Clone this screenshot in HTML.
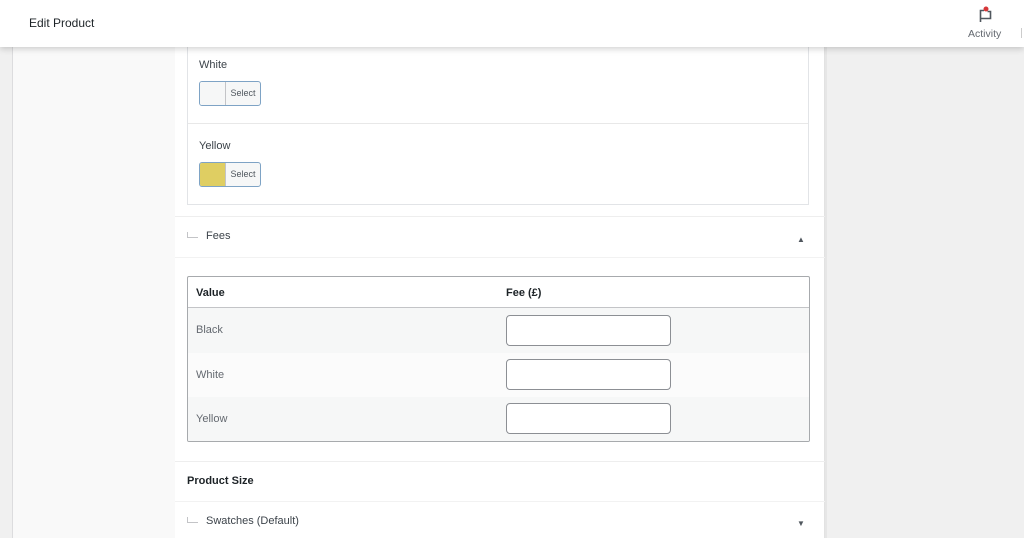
<!DOCTYPE html>
<html><head><style>
*{box-sizing:border-box;margin:0;padding:0}
body{width:1024px;height:538px;overflow:hidden;background:#f0f0f0;font-family:"Liberation Sans",sans-serif;font-size:11px;color:#3c434a;position:relative}
.a{position:absolute}
.hdr{left:0;top:0;width:1024px;height:47px;background:#fff;box-shadow:0 2px 6px rgba(0,0,0,.18);z-index:5}
.btn{position:absolute;width:62px;height:25px;border:1px solid #7ea3c5;border-radius:3px;background:#f6f7f7;display:flex;overflow:hidden}
.btn .sw{width:26px;border-right:1px solid #c3c4c7}
.btn span{flex:1;font-size:9px;line-height:23px;text-align:center;color:#50575e}
.tree{position:absolute;width:11px;height:6px;border-left:1px solid #c3c4c7;border-bottom:1px solid #c3c4c7}
.inp{position:absolute;left:318px;width:165px;height:31px;background:#fff;border:1px solid #8c8f94;border-radius:4px}
.row{position:absolute;left:0;width:621px;height:45px}
.row b{position:absolute;left:8px;top:16px;font-weight:normal;font-size:11px;color:#646970}
</style></head><body>
<div class="a" style="left:12px;top:0;width:163px;height:538px;background:#f9f9f9;border-left:1px solid #dcdcde"></div>
<div class="a" style="left:175px;top:0;width:650px;height:538px;background:#fff;border-right:1px solid #e2e2e2"></div>
<div class="a" style="left:825px;top:0;width:2px;height:538px;background:#e6e6e6"></div>
<div class="a" style="left:187px;top:40px;width:622px;height:165px;border:1px solid #e2e4e7;border-top:none"></div>
<div class="a" style="left:188px;top:123px;width:620px;height:1px;background:#e8e8e8"></div>
<div class="a" style="left:199px;top:59px;font-size:11px;color:#3c434a">White</div>
<div class="btn" style="left:199px;top:81px"><div class="sw" style="background:#f6f7f7"></div><span>Select</span></div>
<div class="a" style="left:199px;top:140px;font-size:11px;color:#3c434a">Yellow</div>
<div class="btn" style="left:199px;top:162px"><div class="sw" style="background:#dfce62"></div><span>Select</span></div>
<div class="a" style="left:175px;top:216px;width:650px;height:1px;background:#eee"></div>
<div class="a" style="left:175px;top:257px;width:650px;height:1px;background:#f2f2f2"></div>
<div class="tree" style="left:187px;top:232px"></div>
<div class="a" style="left:206px;top:230px;color:#3c434a">Fees</div>
<div class="a" style="left:797px;top:235px;font-size:8px;color:#50575e">▲</div>
<div class="a" style="left:187px;top:276px;width:623px;height:166px;border:1px solid #a7aaad;border-radius:2px;overflow:hidden;background:#fff">
 <div class="a" style="left:8px;top:10px;font-weight:bold;color:#1d2327">Value</div>
 <div class="a" style="left:318px;top:10px;font-weight:bold;color:#1d2327">Fee (£)</div>
 <div class="a" style="left:0;top:30px;width:621px;height:1px;background:#c3c4c7"></div>
 <div class="row" style="top:31px;background:#f6f7f7"><b>Black</b><div class="inp" style="top:7px"></div></div>
 <div class="row" style="top:76px;background:#fbfbfb"><b>White</b><div class="inp" style="top:6px"></div></div>
 <div class="row" style="top:120px;background:#f6f7f7"><b>Yellow</b><div class="inp" style="top:6px"></div></div>
</div>
<div class="a" style="left:175px;top:461px;width:650px;height:1px;background:#eee"></div>
<div class="a" style="left:187px;top:475px;font-weight:bold;color:#1d2327">Product Size</div>
<div class="a" style="left:175px;top:501px;width:650px;height:1px;background:#f2f2f2"></div>
<div class="tree" style="left:187px;top:517px"></div>
<div class="a" style="left:206px;top:515px;color:#3c434a">Swatches (Default)</div>
<div class="a" style="left:797px;top:519px;font-size:8px;color:#50575e">▼</div>
<div class="a hdr">
 <div class="a" style="left:29px;top:16px;font-size:12px;color:#1d2327;font-weight:500">Edit Product</div>
 <svg class="a" style="left:976px;top:4px" width="20" height="20" viewBox="0 0 20 20"><path d="M4.5 18V6.5h3.5M4.5 14.5h10V7.5h-3" fill="none" stroke="#50575e" stroke-width="1.6"/><circle cx="10" cy="5" r="2.5" fill="#d63638"/></svg>
 <div class="a" style="left:968px;top:28px;font-size:10.5px;color:#646970">Activity</div>
 <div class="a" style="left:1021px;top:28px;width:1px;height:10px;background:#ccc"></div>
</div>
</body></html>
